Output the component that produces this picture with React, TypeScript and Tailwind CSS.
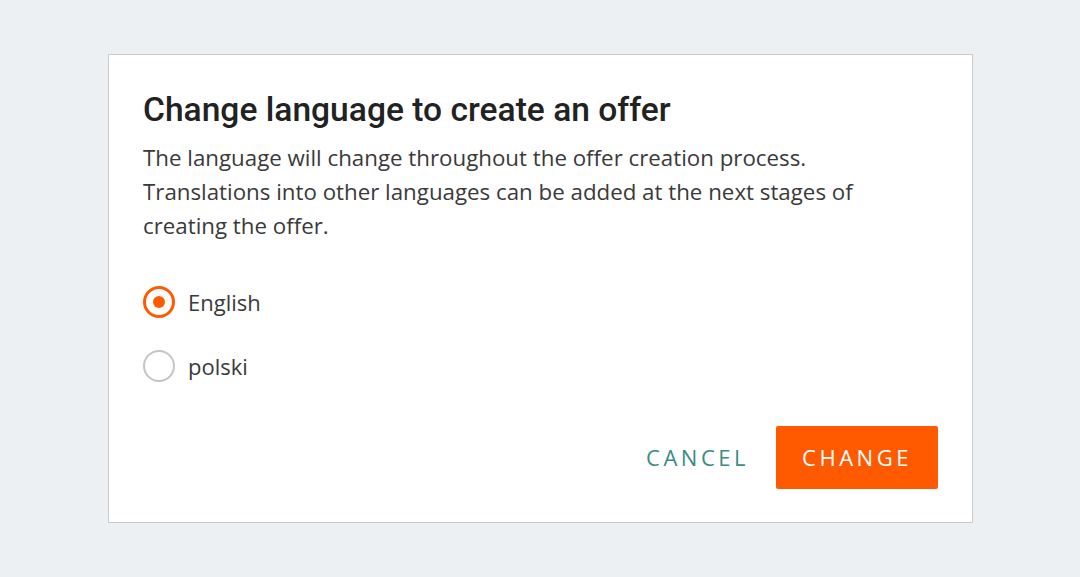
import { useState } from "react";

const LANGS = [
  { id: "en", label: "English" },
  { id: "pl", label: "polski" },
];

export default function App() {
  const [lang, setLang] = useState("en");

  return (
    <div className="min-h-[577px] w-full bg-[#ecf0f3] pt-[54px] pl-[108px]">
      <div className="w-[865px] h-[469px] bg-white border border-[#c9cccf] pl-[34px] pr-[34px] pt-[34px] flex flex-col">
        <h1 className="font-['Roboto',sans-serif] font-medium text-[33.6px] leading-[42px] text-[#222222]">
          Change language to create an offer
        </h1>
        <p className="mt-[10px] font-['Open_Sans',sans-serif] text-[22.3px] leading-[34px] text-[#3a3a3a] w-[730px]">
          The language will change throughout the offer creation process. Translations into other languages can be added at the next stages of creating the offer.
        </p>

        <div className="mt-[43px] flex flex-col gap-[32px]">
          {LANGS.map((l) => {
            const active = lang === l.id;
            return (
              <button
                key={l.id}
                onClick={() => setLang(l.id)}
                className="flex items-center gap-[13px] text-left"
              >
                <span
                  className={
                    active
                      ? "w-[32px] h-[32px] rounded-full border-[3px] border-[#ff5a00] flex items-center justify-center"
                      : "w-[32px] h-[32px] rounded-full border-2 border-[#c4c4c4]"
                  }
                >
                  {active && <span className="w-[12px] h-[12px] rounded-full bg-[#ff5a00]" />}
                </span>
                <span className="font-['Open_Sans',sans-serif] text-[22px] leading-[32px] text-[#3a3a3a]">
                  {l.label}
                </span>
              </button>
            );
          })}
        </div>

        <div className="mt-[44px] flex justify-end items-center gap-[27px]">
          <button className="font-['Open_Sans',sans-serif] text-[22px] tracking-[3.5px] text-[#3b8b86]">
            CANCEL
          </button>
          <button className="w-[162px] h-[63px] rounded-[2px] bg-[#ff5a00] font-['Open_Sans',sans-serif] text-[22px] tracking-[3.5px] text-white">
            CHANGE
          </button>
        </div>
      </div>
    </div>
  );
}
